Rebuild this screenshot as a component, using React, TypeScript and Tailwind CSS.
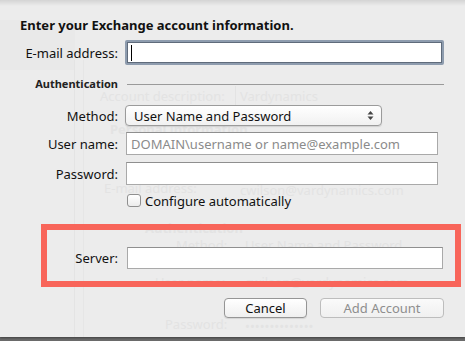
import React from "react";

const Ghost = ({ x, y, children, bold }: { x: number; y: number; children: React.ReactNode; bold?: boolean }) => (
  <div
    className={`absolute whitespace-nowrap text-[13px] leading-[16px] text-[#e3e3e3] ${bold ? "font-bold" : ""}`}
    style={{ left: x, top: y }}
  >
    {children}
  </div>
);

const Label = ({ children, w = "w-[98px]" }: { children: React.ReactNode; w?: string }) => (
  <div className={`${w} shrink-0 text-right text-[13px] leading-[16px] text-[#111]`}>{children}</div>
);

export default function App() {
  return (
    <div className="relative w-[465px] h-[341px] overflow-hidden bg-[#6a6a6a] font-['Noto_Sans',sans-serif]">
      <div className="relative h-[337px] bg-[#ececec] shadow-[0_1px_2px_rgba(0,0,0,0.4)]">
        {/* background window showing through */}
        <div className="pointer-events-none absolute inset-0">
          <div className="absolute left-0 top-[20px] h-[50px] w-[75px] bg-[#e9e9e9]" />
          <div className="absolute left-[74px] top-[60px] h-[277px] w-px bg-[#e4e4e4]" />
          <div className="absolute left-[83px] top-[60px] h-[277px] w-px bg-[#e6e6e6]" />
          <Ghost x={100} y={88}>Account description:</Ghost>
          <div className="absolute left-[235px] top-[86px] h-[20px] w-px bg-[#e3e3e3]" />
          <Ghost x={240} y={88}>Vardynamics</Ghost>
          <Ghost x={110} y={121} bold>Personal information</Ghost>
          <Ghost x={104} y={180}>E-mail address:</Ghost>
          <Ghost x={240} y={182}>cwilson@vardynamics.com</Ghost>
          <Ghost x={145} y={220} bold>Authentication</Ghost>
          <Ghost x={176} y={237}>Method:</Ghost>
          <Ghost x={245} y={237}>User Name and Password</Ghost>
          <Ghost x={155} y={274}>User name:</Ghost>
          <Ghost x={245} y={274}>cwilson@vardynamics.com</Ghost>
          <Ghost x={165} y={316}>Password:</Ghost>
          <Ghost x={245} y={318}>••••••••••••••</Ghost>
        </div>
        <div className="pointer-events-none absolute left-0 right-0 top-0 h-[6px] bg-gradient-to-b from-[#d4d4d4] to-transparent" />

        <div className="relative flex w-[444px] flex-col pl-[20px] pt-[17px]">
          <div className="h-[16px] text-[13px] font-bold leading-[16px] text-[#111]">
            Enter your Exchange account information.
          </div>

          <div className="mt-[7px] flex h-[25px] items-center">
            <Label>E-mail address:</Label>
            <div className="ml-[7px] flex h-[25px] w-[319px] items-center rounded-[2px] border-2 border-[#8e9cae] bg-white shadow-[inset_0_0_0_1px_#5f6b7b]">
              <div className="ml-[4px] h-[16px] w-px bg-black" />
            </div>
          </div>

          <div className="mt-[12px] flex h-[14px] items-center">
            <div className="w-[98px] shrink-0 text-right text-[11px] font-bold leading-[14px] text-[#222]">
              Authentication
            </div>
            <div className="ml-[9px] h-px flex-1 bg-[#9a9a9a]" />
          </div>

          <div className="mt-[14px] flex h-[21px] items-center">
            <Label>Method:</Label>
            <div className="ml-[7px] flex h-[21px] w-[257px] items-center justify-between rounded-[4px] border border-[#9b9b9b] bg-gradient-to-b from-white to-[#f1f1f1] pl-[8px] pr-[7px] shadow-[0_1px_1px_rgba(0,0,0,0.12)]">
              <span className="text-[13px] leading-[16px] text-[#111]">User Name and Password</span>
              <svg width="7" height="11" viewBox="0 0 7 11">
                <path d="M3.5 1 L6.5 4.5 L0.5 4.5 Z" fill="#444" />
                <path d="M3.5 10 L6.5 6.5 L0.5 6.5 Z" fill="#444" />
              </svg>
            </div>
          </div>

          <div className="mt-[6px] flex h-[23px] items-center">
            <Label>User name:</Label>
            <div className="ml-[8px] flex h-[23px] w-[312px] items-center border border-[#a9a9a9] border-t-[#8f8f8f] bg-white pl-[4px] text-[13px] leading-[16px] text-[#8b8b8b]">
              DOMAIN\username or name@example.com
            </div>
          </div>

          <div className="mt-[7px] flex h-[23px] items-center">
            <Label>Password:</Label>
            <div className="ml-[8px] h-[23px] w-[312px] border border-[#a9a9a9] border-t-[#8f8f8f] bg-white" />
          </div>

          <div className="mt-[9px] flex h-[13px] items-center">
            <div className="ml-[107px] h-[13px] w-[14px] rounded-[3px] border border-[#8f8f8f] bg-gradient-to-b from-white to-[#ececec]" />
            <span className="ml-[4px] text-[13px] leading-[16px] text-[#111]">Configure automatically</span>
          </div>

          <div className="ml-[21px] mt-[17px] h-[63px] w-[420px] border-[6px] border-[#f8655a] pt-[17px]">
            <div className="flex h-[22px] items-center">
              <Label w="w-[71px]">Server:</Label>
              <div className="ml-[9px] h-[22px] w-[316px] border border-[#a9a9a9] border-t-[#8f8f8f] bg-white" />
            </div>
          </div>

          <div className="mt-[11px] flex justify-end gap-[13px]">
            <button className="h-[20px] w-[83px] rounded-[4px] border border-[#959595] bg-gradient-to-b from-white to-[#efefef] text-[13px] leading-[16px] text-[#111] shadow-[0_1px_1px_rgba(0,0,0,0.1)]">
              Cancel
            </button>
            <button className="h-[20px] w-[124px] rounded-[4px] border border-[#bdbdbd] bg-gradient-to-b from-[#fafafa] to-[#f0f0f0] text-[13px] leading-[16px] text-[#8e8e8e]">
              Add Account
            </button>
          </div>
        </div>
      </div>
    </div>
  );
}
